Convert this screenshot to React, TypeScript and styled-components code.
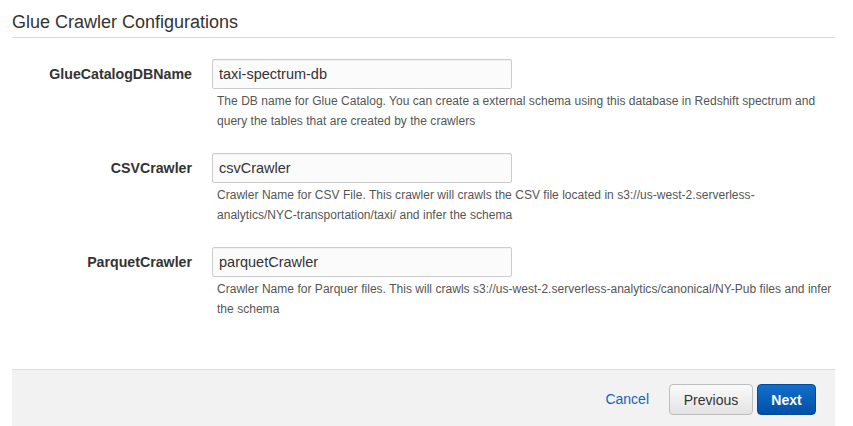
import React from "react";
import styled, { createGlobalStyle } from "styled-components";

const Global = createGlobalStyle`
  html, body { margin: 0; padding: 0; background: #ffffff; }
  body { font-family: "Liberation Sans", Arial, sans-serif; color: #333; }
  * { box-sizing: border-box; }
`;

const Page = styled.div`
  width: 823px;
  margin-left: 12px;
  display: flex;
  flex-direction: column;
  height: 426px;
`;

const Header = styled.h2`
  margin: 0;
  padding: 12px 0 4px 0;
  font-size: 18px;
  line-height: 21px;
  font-weight: 400;
  color: #333;
  border-bottom: 1px solid #dcdcdc;
`;

const Form = styled.div`
  display: flex;
  flex-direction: column;
  gap: 22px;
  padding-top: 21px;
  flex: 1;
`;

const Row = styled.div`
  display: grid;
  grid-template-columns: 180px 1fr;
  column-gap: 20px;
`;

const Label = styled.label`
  font-size: 14.2px;
  font-weight: 700;
  color: #333;
  text-align: right;
  line-height: 30px;
`;

const Field = styled.div`
  display: flex;
  flex-direction: column;
`;

const Input = styled.input`
  width: 300px;
  height: 30px;
  border: 1px solid #cccccc;
  border-radius: 2px;
  background: #fbfbfb;
  padding: 0 6px;
  font-family: "Liberation Sans", Arial, sans-serif;
  font-size: 14.5px;
  color: #333;
  outline: none;
  box-shadow: inset 0 1px 1px rgba(0, 0, 0, 0.04);
`;

const Help = styled.div`
  margin-top: 2px;
  padding-left: 5px;
  font-size: 12px;
  letter-spacing: 0.03px;
  line-height: 20px;
  color: #555;
  max-width: 630px;
`;

const NoWrap = styled.span`
  white-space: nowrap;
`;

const Footer = styled.div`
  border-top: 1px solid #dddddd;
  background: #f2f2f2;
  height: 57px;
  display: flex;
  align-items: flex-start;
  justify-content: flex-end;
  padding: 14px 19px 0 0;
`;

const CancelLink = styled.a`
  font-size: 14px;
  color: #1166bb;
  text-decoration: none;
  line-height: 31px;
  margin-right: 20px;
  cursor: pointer;
`;

const Button = styled.button<{ $primary?: boolean }>`
  height: 31px;
  width: ${(p) => (p.$primary ? "59px" : "84px")};
  padding: 0;
  margin-left: ${(p) => (p.$primary ? "4px" : "0")};
  border-radius: 4px;
  font-family: "Liberation Sans", Arial, sans-serif;
  font-size: 14px;
  font-weight: ${(p) => (p.$primary ? 700 : 400)};
  cursor: pointer;
  color: ${(p) => (p.$primary ? "#ffffff" : "#333333")};
  border: 1px solid ${(p) => (p.$primary ? "#004a9c" : "#bdbdbd")};
  background: ${(p) =>
    p.$primary
      ? "linear-gradient(to bottom, #146ec9, #0050a8)"
      : "linear-gradient(to bottom, #fafafa, #e3e3e3)"};
`;

const fields: { label: string; value: string; help: React.ReactNode }[] = [
  {
    label: "GlueCatalogDBName",
    value: "taxi-spectrum-db",
    help:
      "The DB name for Glue Catalog. You can create a external schema using this database in Redshift spectrum and query the tables that are created by the crawlers",
  },
  {
    label: "CSVCrawler",
    value: "csvCrawler",
    help: (
      <>
        Crawler Name for CSV File. This crawler will crawls the CSV file located in s3://us-west-2.serverless-
        <NoWrap>analytics/NYC-transportation/taxi/</NoWrap> and infer the schema
      </>
    ),
  },
  {
    label: "ParquetCrawler",
    value: "parquetCrawler",
    help:
      "Crawler Name for Parquer files. This will crawls s3://us-west-2.serverless-analytics/canonical/NY-Pub files and infer the schema",
  },
];

export default function App() {
  return (
    <>
      <Global />
      <Page>
        <Header>Glue Crawler Configurations</Header>
        <Form>
          {fields.map((f) => (
            <Row key={f.label}>
              <Label>{f.label}</Label>
              <Field>
                <Input defaultValue={f.value} />
                <Help>{f.help}</Help>
              </Field>
            </Row>
          ))}
        </Form>
        <Footer>
          <CancelLink>Cancel</CancelLink>
          <Button>Previous</Button>
          <Button $primary>Next</Button>
        </Footer>
      </Page>
    </>
  );
}
